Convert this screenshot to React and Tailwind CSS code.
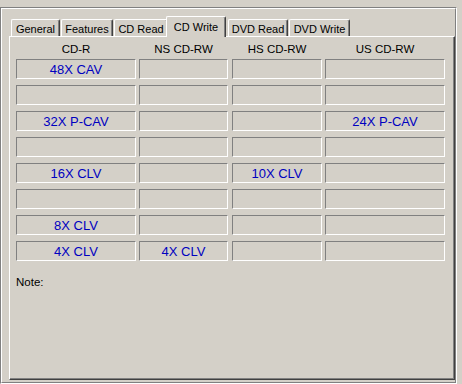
import React from 'react'

const tabs = [
  { label: 'General', cls: 'ml-0 w-[49px]' },
  { label: 'Features', cls: 'ml-[1px] w-[52px]' },
  { label: 'CD Read', cls: 'ml-[1px] w-[54px]' },
  { label: 'CD Write', cls: 'ml-[-2px] w-[60px]', active: true },
  { label: 'DVD Read', cls: 'ml-[2px] w-[60px]' },
  { label: 'DVD Write', cls: 'ml-[1px] w-[61px]' },
]

const columns = [
  { name: 'CD-R', cls: 'w-[120px]' },
  { name: 'NS CD-RW', cls: 'ml-[3px] w-[89px]' },
  { name: 'HS CD-RW', cls: 'ml-[4px] w-[90px]' },
  { name: 'US CD-RW', cls: 'ml-[3px] w-[120px]' },
]

const rows = [
  ['48X CAV', '', '', ''],
  ['', '', '', ''],
  ['32X P-CAV', '', '', '24X P-CAV'],
  ['', '', '', ''],
  ['16X CLV', '', '10X CLV', ''],
  ['', '', '', ''],
  ['8X CLV', '', '', ''],
  ['4X CLV', '4X CLV', '', ''],
]

const Tab = ({ label, cls, active }) => {
  if (active) {
    return (
      <div
        className={`${cls} relative z-10 h-[21px] mb-[-1px] bg-[#d4d0c8] border-t border-l border-r border-t-white border-l-white border-r-[#404040] shadow-[inset_-1px_0_#808080] rounded-t-[2px] flex justify-center pt-[3px] leading-[14px]`}
      >
        {label}
      </div>
    )
  }
  return (
    <div
      className={`${cls} h-[17px] border-t border-l border-r border-t-white border-l-white border-r-[#404040] shadow-[inset_-1px_0_#808080] rounded-t-[2px] flex justify-center pt-[2px] leading-[14px]`}
    >
      {label}
    </div>
  )
}

export default function App() {
  return (
    <div className="w-[462px] h-[384px] bg-[#d4d0c8] pt-[7px] font-['Liberation_Sans',Arial,sans-serif] text-[11px] text-black">
      {/* group frame */}
      <div className="w-[457px] h-[377px] border border-t-[#808080] border-l-[#808080] border-r-white border-b-white">
        <div className="h-full border border-t-white border-l-white border-r-[#808080] border-b-[#808080] pt-[7px]">
          {/* tabs */}
          <div className="flex items-end h-[20px] pl-[9px]">
            {tabs.map((t) => (
              <Tab key={t.label} {...t} />
            ))}
          </div>

          {/* panel */}
          <div className="ml-[7px] w-[446px] h-[344px] border border-t-white border-l-white border-r-[#404040] border-b-[#404040] shadow-[inset_-1px_-1px_#808080] pl-[6px]">
            <div className="flex h-[22px] items-center">
              {columns.map((c) => (
                <div key={c.name} className={`${c.cls} text-center leading-[14px] pt-[1px] text-[11.5px]`}>
                  {c.name}
                </div>
              ))}
            </div>

            <div className="flex flex-col gap-[6px]">
              {rows.map((r, i) => (
                <div key={i} className="flex">
                  {r.map((v, j) => (
                    <div
                      key={j}
                      className={`${columns[j].cls} h-[20px] border border-t-[#808080] border-l-[#808080] border-r-white border-b-white flex items-center justify-center pt-[2px] text-[13px] leading-[16px] text-[#0000c0]`}
                    >
                      {v}
                    </div>
                  ))}
                </div>
              ))}
            </div>

            <div className="mt-[14px] leading-[14px] text-[11.5px]">Note:</div>
          </div>
        </div>
      </div>
    </div>
  )
}
